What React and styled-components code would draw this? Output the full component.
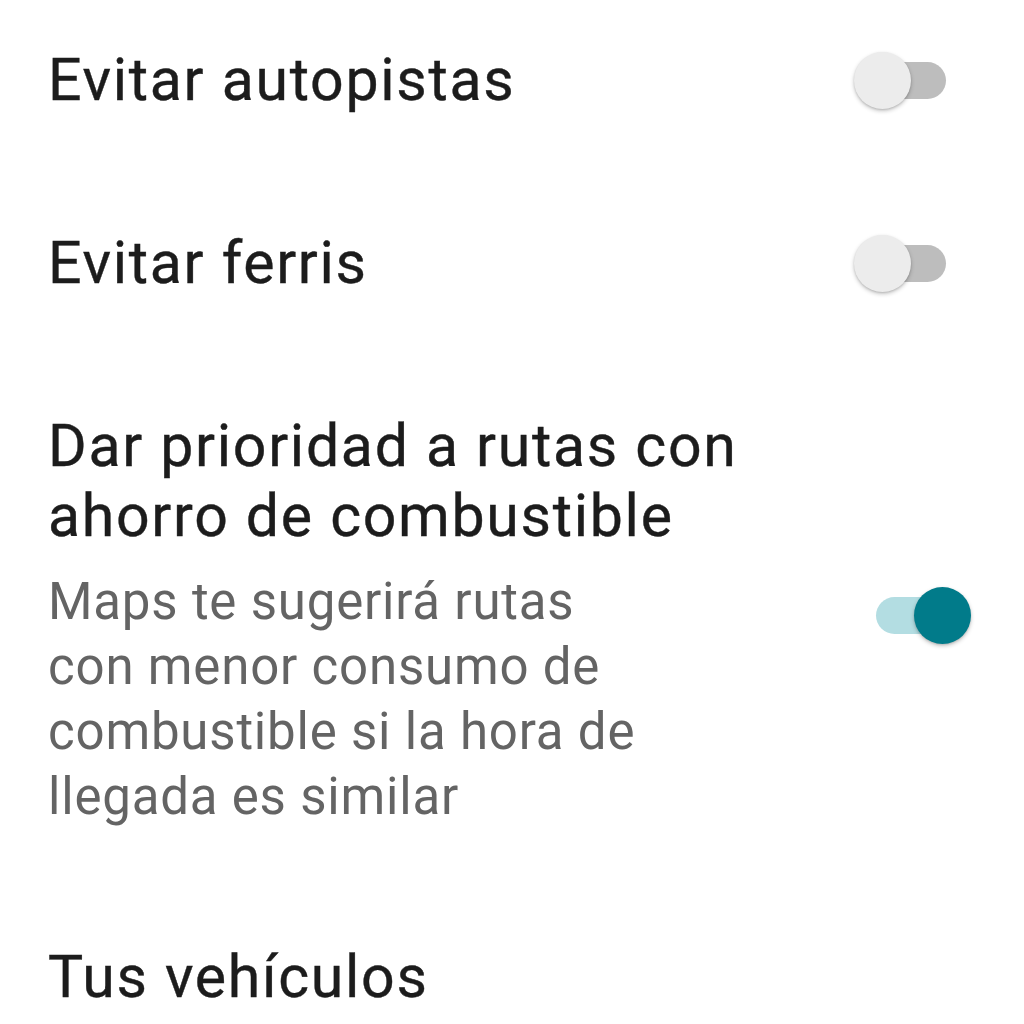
import React, { useState } from 'react';
import styled, { createGlobalStyle } from 'styled-components';

const GlobalStyle = createGlobalStyle`
  html, body {
    margin: 0;
    padding: 0;
    background: #ffffff;
  }
  body {
    font-family: Roboto, "Noto Sans", sans-serif;
    -webkit-font-smoothing: antialiased;
  }
`;

const Page = styled.div`
  width: 1024px;
  height: 1024px;
  overflow: hidden;
  box-sizing: border-box;
  padding: 45px 0 0 48px;
  display: flex;
  flex-direction: column;
  gap: 113px;
`;

const Row = styled.div`
  display: flex;
  align-items: center;
  justify-content: space-between;
  padding-right: 78px;
`;

const TextCol = styled.div`
  display: flex;
  flex-direction: column;
  max-width: 900px;
`;

const Title = styled.div`
  font-size: 59px;
  line-height: 70px;
  color: #1c1c1c;
  font-weight: 400;
  letter-spacing: 1.7px;
  -webkit-text-stroke: 0.4px #1c1c1c;
`;

const Desc = styled.div`
  margin-top: 18px;
  font-size: 51px;
  line-height: 65px;
  color: #646464;
  letter-spacing: 0.8px;
`;

const SideRow = styled.div`
  display: flex;
  align-items: flex-start;
  justify-content: space-between;
`;

const Track = styled.button`
  position: relative;
  flex: none;
  width: 72px;
  height: 37px;
  border: none;
  padding: 0;
  border-radius: 19px;
  cursor: pointer;
  background: ${p => (p.$on ? '#b3dde2' : '#bdbdbd')};
  margin-top: ${p => p.$offset || 0}px;
`;

const Thumb = styled.span`
  position: absolute;
  top: -10px;
  left: ${p => (p.$on ? 38 : -20)}px;
  width: 57px;
  height: 57px;
  border-radius: 50%;
  background: ${p => (p.$on ? '#017b8a' : '#ececec')};
  box-shadow: 0 2px 4px rgba(0, 0, 0, 0.22), 0 1px 2px rgba(0, 0, 0, 0.12);
`;

const Switch = ({ on, onToggle, offset }) => (
  <Track $on={on} $offset={offset} onClick={onToggle} aria-pressed={on}>
    <Thumb $on={on} />
  </Track>
);

export default function App() {
  const [opts, setOpts] = useState({ autopistas: false, ferris: false, eco: true });
  const toggle = key => setOpts({ ...opts, [key]: !opts[key] });

  return (
    <>
      <GlobalStyle />
      <Page>
        <Row>
          <Title>Evitar autopistas</Title>
          <Switch on={opts.autopistas} onToggle={() => toggle('autopistas')} />
        </Row>
        <Row>
          <Title>Evitar ferris</Title>
          <Switch on={opts.ferris} onToggle={() => toggle('ferris')} />
        </Row>
        <TextCol>
          <Title>
            Dar prioridad a rutas con
            <br />
            ahorro de combustible
          </Title>
          <SideRow>
            <Desc>
              Maps te sugerirá rutas
              <br />
              con menor consumo de
              <br />
              combustible si la hora de
              <br />
              llegada es similar
            </Desc>
            <Switch on={opts.eco} onToggle={() => toggle('eco')} offset={46} />
          </SideRow>
        </TextCol>
        <Row>
          <Title>Tus vehículos</Title>
        </Row>
      </Page>
    </>
  );
}
